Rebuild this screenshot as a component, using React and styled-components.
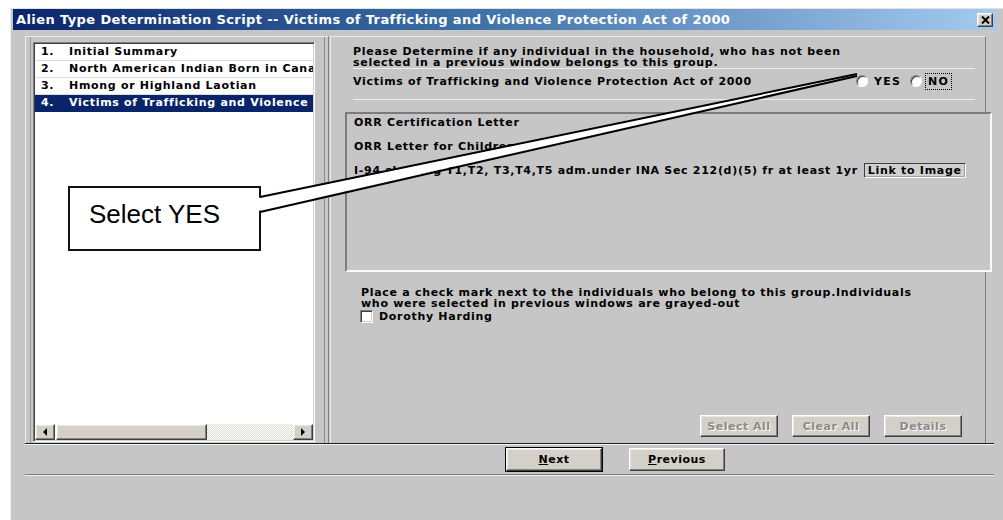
import React from 'react';
import styled, { createGlobalStyle, css } from 'styled-components';

const GlobalStyle = createGlobalStyle`
  html, body {
    margin: 0;
    padding: 0;
    background: #fff;
  }
  body {
    font-family: "DejaVu Sans", Verdana, sans-serif;
  }
`;

const raised = css`
  border: 1px solid;
  border-color: #fff #404040 #404040 #fff;
  box-shadow: inset -1px -1px 0 #808080, inset 1px 1px 0 #e8e8e8;
`;

const sunken = css`
  border: 1px solid;
  border-color: #808080 #fff #fff #808080;
  box-shadow: inset 1px 1px 0 #404040, inset -1px -1px 0 #d4d0c8;
`;

const Page = styled.div`
  position: relative;
  width: 1003px;
  height: 520px;
  overflow: hidden;
  padding: 8px 0 0 10px;
  box-sizing: border-box;
`;

const Window = styled.div`
  height: 512px;
  background: #c6c6c6;
  border-left: 1px solid #ececec;
  border-top: 1px solid #e2e2e2;
  box-sizing: border-box;
  padding-left: 2px;
  display: flex;
  flex-direction: column;
  font-size: 11px;
  font-weight: bold;
  letter-spacing: 0.7px;
  color: #000;
`;

const TitleBar = styled.div`
  height: 21px;
  margin-right: 6px;
  display: flex;
  align-items: center;
  justify-content: space-between;
  padding: 0 4px 0 3px;
  background: linear-gradient(to right, #0a246a, #3a6ea5 45%, #a6caf0);
`;

const TitleText = styled.span`
  color: #fff;
  font-size: 13px;
  font-weight: bold;
  letter-spacing: 0.4px;
  white-space: nowrap;
`;

const CloseBox = styled.div`
  width: 16px;
  height: 14px;
  box-sizing: border-box;
  background: #d4d0c8;
  ${raised};
  display: flex;
  align-items: center;
  justify-content: center;
`;

const Body = styled.div`
  display: flex;
  padding: 6px 0 0 12px;
  height: 409px;
  box-sizing: border-box;
`;

const LeftFrame = styled.div`
  width: 304px;
  flex-shrink: 0;
  height: 409px;
  box-sizing: border-box;
  border: 1px solid;
  border-color: #ececec #808080 #808080 #ececec;
  box-shadow: inset -3px 0 0 #c6c6c6, inset -4px 0 0 #8c8c8c, inset 4px 0 0 #c6c6c6, inset 5px 0 0 #9a9a9a;
  padding: 5px 13px 2px 7px;
  display: flex;
`;

const ListBox = styled.div`
  flex: 1;
  min-width: 0;
  overflow: hidden;
  background: #fff;
  ${sunken};
  display: flex;
  flex-direction: column;
  padding: 1px;
`;

const ListRow = styled.div`
  display: flex;
  height: 16px;
  line-height: 16px;
  border-bottom: 1px solid ${p => (p.$selected ? '#0a246a' : '#dcdcdc')};
  background: ${p => (p.$selected ? '#0a246a' : '#fff')};
  color: ${p => (p.$selected ? '#fff' : '#000')};
  white-space: nowrap;
  overflow: hidden;
`;

const RowNum = styled.span`
  width: 28px;
  padding-left: 6px;
  flex-shrink: 0;
`;

const ListFill = styled.div`
  flex: 1;
`;

const ScrollBar = styled.div`
  height: 16px;
  display: flex;
`;

const ScrollButton = styled.div`
  width: 20px;
  box-sizing: border-box;
  background: #d4d0c8;
  ${raised};
  display: flex;
  align-items: center;
  justify-content: center;
`;

const ScrollThumb = styled.div`
  width: 151px;
  box-sizing: border-box;
  background: #d4d0c8;
  ${raised};
  margin-left: 1px;
`;

const ScrollTrack = styled.div`
  flex: 1;
  background: repeating-conic-gradient(#fff 0 25%, #dcdad4 0 50%) 0 0 / 2px 2px;
`;

const RightPanel = styled.div`
  width: 656px;
  height: 408px;
  margin-left: 1px;
  box-sizing: border-box;
  border-top: 1px solid #ececec;
  border-left: 1px solid #ececec;
  border-right: 1px solid #808080;
  border-bottom: 1px solid #a0a0a0;
  display: flex;
  flex-direction: column;
  padding-top: 9px;
`;

const Intro = styled.div`
  padding-left: 22px;
  line-height: 11px;
  white-space: nowrap;
`;

const Rule = styled.div`
  margin: ${p => p.$top || 0}px 10px 0 22px;
  border-top: 1px solid #ececec;
`;

const QuestionRow = styled.div`
  display: flex;
  align-items: center;
  height: 22px;
  margin-top: 1px;
  padding-left: 22px;
`;

const QuestionText = styled.span`
  flex: 1;
`;

const RadioGroup = styled.div`
  display: flex;
  align-items: center;
  margin-right: 27px;
`;

const RadioDot = styled.span`
  width: 12px;
  height: 12px;
  box-sizing: border-box;
  border-radius: 50%;
  background: #fff;
  border: 1px solid;
  border-color: #808080 #fff #fff #808080;
  box-shadow: inset 1px 1px 0 #404040;
  margin-right: 4px;
`;

const RadioLabel = styled.span`
  margin-right: 7px;
  padding: 1px 2px;
  letter-spacing: 1.2px;
  outline: ${p => (p.$focus ? '1px dotted #000' : 'none')};
`;

const DocBox = styled.div`
  width: 647px;
  height: 160px;
  margin: 12px 0 0 14px;
  box-sizing: border-box;
  background: #c6c6c6;
  border: 2px solid;
  border-color: #7c7c7c #fafafa #fafafa #7c7c7c;
  padding: 3px 0 0 7px;
`;

const DocRow = styled.div`
  height: 24px;
  line-height: 12px;
  display: flex;
  align-items: flex-start;
  white-space: nowrap;
`;

const LinkButton = styled.span`
  margin: -2px 0 0 6px;
  height: 15px;
  line-height: 13px;
  padding: 0 3px;
  box-sizing: border-box;
  background: #d0d0d0;
  border: 1px solid;
  border-color: #404040 #fff #fff #404040;
  box-shadow: inset -1px -1px 0 #a0a0a0;
`;

const CheckIntro = styled.div`
  margin: 15px 0 0 30px;
  line-height: 11px;
  white-space: nowrap;
`;

const CheckRow = styled.label`
  display: flex;
  align-items: center;
  margin: 1px 0 0 29px;
`;

const CheckBox = styled.span`
  width: 13px;
  height: 13px;
  box-sizing: border-box;
  background: #fff;
  ${sunken};
  margin-right: 6px;
`;

const ActionRow = styled.div`
  margin-top: auto;
  margin-bottom: 6px;
  display: flex;
  justify-content: flex-end;
  gap: 14px;
  padding-right: 23px;
`;

const Button = styled.button`
  width: ${p => p.$w || 78}px;
  height: ${p => p.$h || 22}px;
  box-sizing: border-box;
  font: bold 11px "DejaVu Sans", Verdana, sans-serif;
  letter-spacing: 0.5px;
  background: #d4d0c8;
  padding: 0;
  ${raised};
  color: ${p => (p.disabled ? '#8a8a8a' : '#000')};
  text-shadow: ${p => (p.disabled ? '1px 1px 0 #fff' : 'none')};
  ${p =>
    p.$default &&
    css`
      outline: 1px solid #000;
      outline-offset: 0;
    `}
`;

const Footer = styled.div`
  margin: 4px 9px 0 12px;
  border-top: 1px solid #202020;
  box-shadow: inset 0 1px 0 #f4f4f4;
  padding: 4px 0 0 481px;
  display: flex;
  gap: 27px;
`;

const FooterRule = styled.div`
  margin: 3px 9px 0 12px;
  border-top: 1px solid #7a7a7a;
  border-bottom: 1px solid #f2f2f2;
`;

const Callout = styled.div`
  position: absolute;
  left: 68px;
  top: 186px;
  width: 193px;
  height: 65px;
  box-sizing: border-box;
  background: #fff;
  border: 2px solid #111;
  display: flex;
  align-items: center;
  padding: 0 0 9px 19px;
  font-family: "Liberation Sans", Arial, sans-serif;
  font-size: 26px;
  color: #000;
`;

const Pointer = styled.svg`
  position: absolute;
  left: 0;
  top: 0;
  pointer-events: none;
`;

const steps = [
  'Initial Summary',
  'North American Indian Born in Canada',
  'Hmong or Highland Laotian',
  'Victims of Trafficking and Violence Protection Act of 2000',
];

const Arrow = ({ dir }) => (
  <svg width="6" height="8" viewBox="0 0 6 8">
    <path d={dir === 'left' ? 'M5 0 L1 4 L5 8 Z' : 'M1 0 L5 4 L1 8 Z'} fill="#000" />
  </svg>
);

export default function App() {
  return (
    <Page>
      <GlobalStyle />
      <Window>
        <TitleBar>
          <TitleText>
            Alien Type Determination Script -- Victims of Trafficking and Violence Protection Act of 2000
          </TitleText>
          <CloseBox>
            <svg width="9" height="8" viewBox="0 0 9 8">
              <path d="M1 0.5 L8 7.5 M8 0.5 L1 7.5" stroke="#000" strokeWidth="2" />
            </svg>
          </CloseBox>
        </TitleBar>

        <Body>
          <LeftFrame>
            <ListBox>
              {steps.map((s, i) => (
                <ListRow key={s} $selected={i === 3}>
                  <RowNum>{i + 1}.</RowNum>
                  <span>{s}</span>
                </ListRow>
              ))}
              <ListFill />
              <ScrollBar>
                <ScrollButton>
                  <Arrow dir="left" />
                </ScrollButton>
                <ScrollThumb />
                <ScrollTrack />
                <ScrollButton>
                  <Arrow dir="right" />
                </ScrollButton>
              </ScrollBar>
            </ListBox>
          </LeftFrame>

          <RightPanel>
            <Intro>
              Please Determine if any individual in the household, who has not been
              <br />
              selected in a previous window belongs to this group.
            </Intro>
            <Rule />
            <QuestionRow>
              <QuestionText>Victims of Trafficking and Violence Protection Act of 2000</QuestionText>
              <RadioGroup>
                <RadioDot />
                <RadioLabel>YES</RadioLabel>
                <RadioDot />
                <RadioLabel $focus>NO</RadioLabel>
              </RadioGroup>
            </QuestionRow>
            <Rule $top={7} />

            <DocBox>
              <DocRow>ORR Certification Letter</DocRow>
              <DocRow>ORR Letter for Children</DocRow>
              <DocRow>
                I-94 showing T1,T2, T3,T4,T5 adm.under INA Sec 212(d)(5) fr at least 1yr
                <LinkButton>Link to Image</LinkButton>
              </DocRow>
            </DocBox>

            <CheckIntro>
              Place a check mark next to the individuals who belong to this group.Individuals
              <br />
              who were selected in previous windows are grayed-out
            </CheckIntro>
            <CheckRow>
              <CheckBox />
              Dorothy Harding
            </CheckRow>

            <ActionRow>
              <Button disabled>Select All</Button>
              <Button disabled>Clear All</Button>
              <Button disabled>Details</Button>
            </ActionRow>
          </RightPanel>
        </Body>

        <Footer>
          <Button $w={96} $h={23} $default>
            <u>N</u>ext
          </Button>
          <Button $w={96} $h={23}>
            <u>P</u>revious
          </Button>
        </Footer>
        <FooterRule />
      </Window>

      <Callout>Select YES</Callout>
      <Pointer width="1003" height="520" viewBox="0 0 1003 520">
        <polygon points="258,198 856,75 258,211" fill="#fff" />
        <line x1="260" y1="197" x2="857" y2="74" stroke="#000" strokeWidth="2" />
        <line x1="260" y1="212" x2="857" y2="76" stroke="#000" strokeWidth="2" />
      </Pointer>
    </Page>
  );
}
